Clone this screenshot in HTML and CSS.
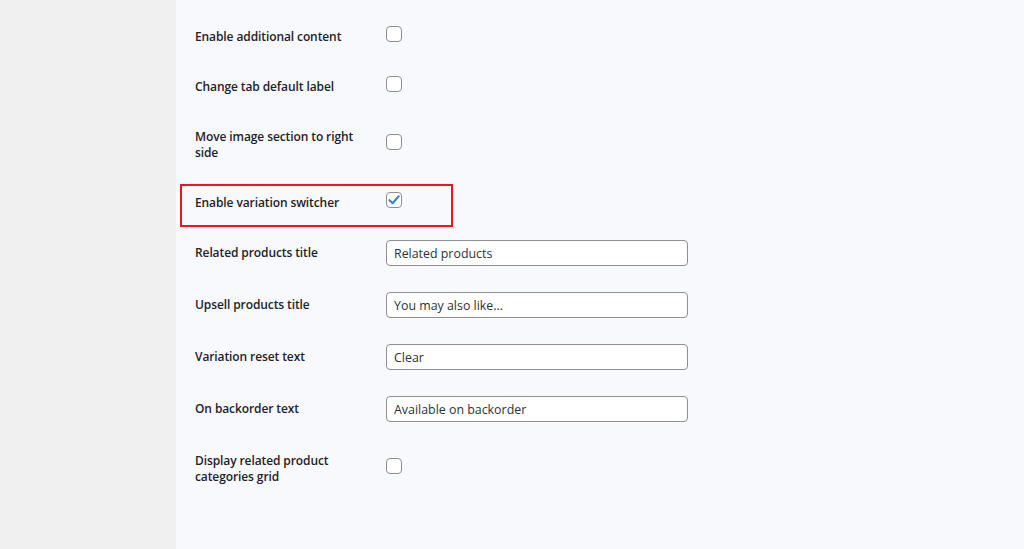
FILE: index.html
```html
<!DOCTYPE html>
<html lang="en">
<head>
    <meta charset="UTF-8">
    <meta name="viewport" content="width=device-width, initial-scale=1.0">
    <title>Product page settings</title>
    <link rel="stylesheet" href="styles.css">
</head>
<body>
    <div class="layout">
        <div class="sidebar"></div>

        <div class="content">
            <table class="form-table">
                <tr class="row-check">
                    <th>Enable additional content</th>
                    <td><span class="checkbox"></span></td>
                </tr>
                <tr class="row-check">
                    <th>Change tab default label</th>
                    <td><span class="checkbox"></span></td>
                </tr>
                <tr class="row-check">
                    <th>Move image section to right side</th>
                    <td><span class="checkbox"></span></td>
                </tr>
                <tr class="row-check highlighted">
                    <th>Enable variation switcher</th>
                    <td>
                        <span class="checkbox checked">
                            <svg width="12" height="10" viewBox="0 0 12 10"><path d="M1.5 5.2 L4.6 8.2 L10.6 1.4" fill="none" stroke="#3582c4" stroke-width="2.1" stroke-linecap="round" stroke-linejoin="round"/></svg>
                        </span>
                    </td>
                </tr>
                <tr class="row-input">
                    <th>Related products title</th>
                    <td><input type="text" value="Related products"></td>
                </tr>
                <tr class="row-input">
                    <th>Upsell products title</th>
                    <td><input type="text" value="You may also like…"></td>
                </tr>
                <tr class="row-input">
                    <th>Variation reset text</th>
                    <td><input type="text" value="Clear"></td>
                </tr>
                <tr class="row-input">
                    <th>On backorder text</th>
                    <td><input type="text" value="Available on backorder"></td>
                </tr>
                <tr class="row-check">
                    <th>Display related product categories grid</th>
                    <td><span class="checkbox"></span></td>
                </tr>
            </table>

            <div class="marker"></div>
        </div>
    </div>
</body>
</html>
```

FILE: styles.css
```css
body {
    font-family: "Open Sans", "Noto Sans", Arial, sans-serif;
    margin: 0;
    background-color: #f8f9fd;
    overflow: hidden;
}

.layout {
    display: flex;
    height: 549px;
}

.sidebar {
    width: 176px;
    flex-shrink: 0;
    background-color: #f0f0f0;
}

.content {
    flex: 1;
    position: relative;
    padding: 11px 0 0 19px;
}

.form-table {
    border-collapse: collapse;
    border-spacing: 0;
}

.form-table th {
    width: 181px;
    padding: 18px 10px 16px 0;
    text-align: left;
    vertical-align: top;
    font-size: 12px;
    font-weight: 600;
    letter-spacing: -0.1px;
    line-height: 16px;
    color: #1d2327;
}

.form-table td {
    padding: 0;
    vertical-align: middle;
}

.row-input td {
    padding: 13px 0;
}

.checkbox {
    display: flex;
    align-items: center;
    justify-content: center;
    width: 14px;
    height: 14px;
    margin-top: -4px;
    border: 1px solid #8c8f94;
    border-radius: 4px;
    background-color: #ffffff;
}

.checkbox svg {
    display: block;
}

input {
    width: 302px;
    height: 26px;
    padding: 0 7px;
    border: 1px solid #8c8f94;
    border-radius: 4px;
    background-color: #ffffff;
    font-family: inherit;
    font-size: 12.4px;
    color: #2c3338;
    box-sizing: border-box;
    display: block;
}

/* annotation around the variation switcher row */
.marker {
    position: absolute;
    left: 4px;
    top: 184px;
    width: 269px;
    height: 39px;
    border: 2px solid #f0141c;
}
```
